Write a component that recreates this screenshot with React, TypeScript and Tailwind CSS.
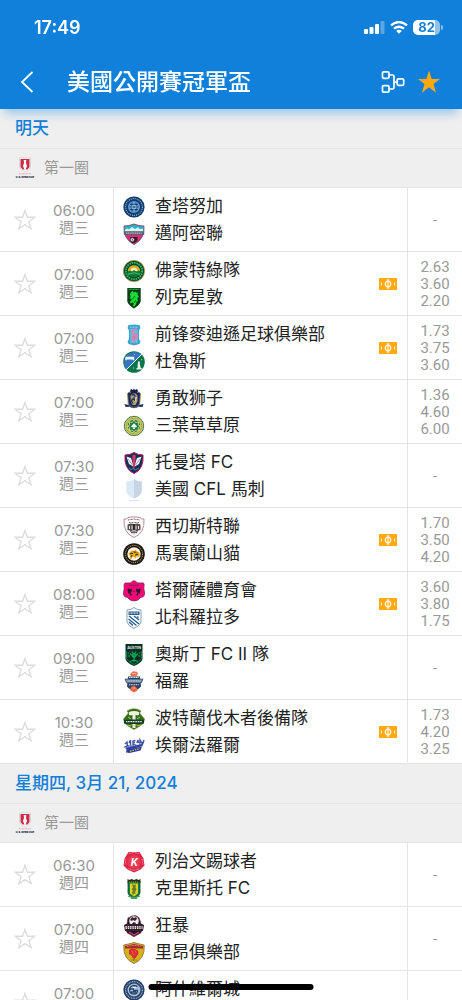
import type { ReactNode } from "react";

const emblems: Record<string, ReactNode> = {
  chattanooga: (
    <>
      <circle cx="11" cy="11" r="10.6" fill="#123a6b" />
      <circle cx="11" cy="11" r="8.4" fill="none" stroke="#7fb0de" strokeWidth="1.2" strokeDasharray="1.1 0.9" />
      <circle cx="11" cy="11" r="6" fill="#5f9bd3" />
      <path d="M7 8.5h8M6.5 11h9M7 13.5h8M9 6.5v9M13 6.5v9" stroke="#123a6b" strokeWidth="0.9" />
      <circle cx="11" cy="11" r="2" fill="none" stroke="#b6d5f2" strokeWidth="0.8" />
    </>
  ),
  miami: (
    <>
      <path d="M1 3 Q6 3 11 1 Q16 3 21 3 Q22 16 11 21.5 Q0 16 1 3Z" fill="#e6287c" stroke="#4d5961" strokeWidth="0.8" />
      <path d="M1.4 3.4 Q6 3.5 11 1.5 Q16 3.5 20.6 3.4 V9 H1.4Z" fill="#27b3c2" />
      <path d="M2 7l2-1.5 2 1 3-2.5 3 2 3-1.800 2 2 3-.800v3H2Z" fill="#dff2f3" />
      <path d="M0.8 8.3h20.4v3.6H0.8Z" fill="#59636c" />
      <path d="M3 10.1h16" stroke="#b9c1c6" strokeWidth="1.300" strokeDasharray="1.2 0.6" />
      <path d="M7.500 14h7v3.500l-3 2.500H9l-2-2Z" fill="#29242c" />
      <circle cx="9.3" cy="16.8" r="2" fill="#fff" stroke="#222" strokeWidth="0.6" />
      <path d="M8.7 16.200h1.200v1.200H8.700z" fill="#29242c" />
    </>
  ),
  vermont: (
    <>
      <circle cx="11" cy="11" r="10.6" fill="#0c3f28" stroke="#af914a" strokeWidth="0.8" />
      <circle cx="11" cy="11" r="8.2" fill="none" stroke="#27b95c" strokeWidth="2" strokeDasharray="1.6 0.8" />
      <circle cx="11" cy="11" r="6.3" fill="#13743d" />
      <path d="M4.8 11.5a6.2 6.2 0 0 1 12.4 0Z" fill="#dfa92a" />
      <path d="M7.6 11.2a3.4 3.4 0 0 1 6.8 0Z" fill="#fff0a5" />
      <path d="M3.8 12.6 7 10.5l2 1.3 2-1.8 2.3 1.8 2-1.2 3 2-1.4 3H5.2Z" fill="#087a3d" />
      <path d="M5 14.3q6-3 12 0" fill="none" stroke="#53d66e" strokeWidth="0.8" />
    </>
  ),
  lexington: (
    <>
      <path d="M4.3 1h13.4v13.2q-1 4-6.7 7.3-5.700-3.300-6.700-7.300Z" fill="#063b17" />
      <path d="M5.700 2.300h10.600" stroke="#26c33c" strokeWidth="1.200" strokeDasharray="1 .5" />
      <path d="m8 5 2-1 .8 1.500 1.500-1 1 1.200 2-.2-1 2 1.500 1.800-1.500 2.500.8 2.200-1.800.8 0 2-2 2.600-1.600-.7 1.300-2-1.500-1.300-1.800 1-1-1.500 2-1.700-.7-1.800-1.500.5 1-2.200L7 7.500Z" fill="#17df32" />
      <path d="M9 12.500 12 9M11 16l2-3" stroke="#063b17" strokeWidth=".7" />
    </>
  ),
  madison: (
    <>
      <path d="M5.500 1 11 .4l5.500.6 1 3-1.500 2.500v8.500l1.500 2.500-1 2.500-5.500 1.500L5.500 20l-1-2.500L6 15V6.500L4.500 4Z" fill="#3ba5cf" />
      <path d="M7.300 5h7.400v12L11 19.500 7.300 17Z" fill="#71bad9" />
      <path d="M13.500 4.500 9.500 7v2.500l4.500 1.200V14l-3 1-2.500-.8M11 9v6l-.5 4" fill="none" stroke="#e47bb5" strokeWidth="1.500" />
      <path d="M9 12h4l-1 3H9Z" fill="#d879b0" />
      <path d="M7 3.200h8M7.500 18h2M13 18h2" stroke="#a9d8ea" strokeWidth=".9" strokeDasharray="1 .5" />
    </>
  ),
  duluth: (
    <>
      <circle cx="11" cy="11" r="10.800" fill="#08764a" />
      <path d="M3.400 18.600A10.800 10.800 0 0 1 18.600 3.400Z" fill="#3674bf" />
      <path d="M3 19 19 3" stroke="#fff" strokeWidth=".9" />
      <path d="M3 9.300V6.500h7.500v2.800M3 7.800h7.500" fill="none" stroke="#f1f7fb" strokeWidth="1.400" />
      <path d="m15.500 10 1.500 1-.2 2 1 4h1v1.500h-5.300V17h1l.3-5Z" fill="#e9f0e7" />
      <path d="m11 3 .8.7M18 9l1-.6M10 17h1" stroke="#e9f0e7" strokeWidth=".8" />
    </>
  ),
  valor: (
    <>
      <path d="M4.500 5.500 6 4l5 1 5-1 1.500 1.500-.8 11L11 20l-5.700-3.500Z" fill="#142a63" stroke="#a99257" strokeWidth=".9" />
      <path d="m7 3 1-2 2 1 1-1.500L12 2l2-1 1 2-1 2H8Z" fill="#17224d" />
      <path d="M7.500 9q0-3.500 3.500-3.500T14.500 9v4l-2 4h-3L8 14Z" fill="#b8a15e" />
      <path d="m8.500 7 2.500-.5 1.500 2-1.500 1 .5 2.500-2-1-1 2 1.500 2.500" fill="none" stroke="#1b306c" strokeWidth="1.300" />
      <path d="m11.500 9 2 .5-1 2 .4 2" fill="none" stroke="#f2e8ba" strokeWidth=".9" />
      <path d="m1.500 16 4 1q5.500 2 11 0l4-1-1 3-4-.2q-4.500 2.500-9 0l-4 .2Z" fill="#202d61" />
      <path d="M6 18.500q5 1.500 10 0" fill="none" stroke="#b6ac87" strokeWidth=".7" strokeDasharray="1 .6" />
    </>
  ),
  clover: (
    <>
      <circle cx="11" cy="11" r="9.700" fill="#d9c861" stroke="#27754a" strokeWidth=".9" />
      <circle cx="11" cy="11" r="7.700" fill="none" stroke="#618f4c" strokeWidth=".9" strokeDasharray="1 .7" />
      <circle cx="11" cy="11" r="6.200" fill="#19764a" />
      <path d="m11 5 1.700 2.500 3-.5-.5 3L17.500 11l-2.300 1.500.5 3-3-.5L11 17l-1.700-2-3 .5.500-3L4.500 11l2.300-1-.5-3 3 .5Z" fill="none" stroke="#d9dd78" strokeWidth=".9" />
      <path d="M11 8.500q2 0 1.200 1.700 2-.3 1.500 1.500-.5 1.500-2.200.4l.5 2h-2l.5-2q-1.700 1-2.200-.4-.5-1.800 1.500-1.500-.8-1.700 1.200-1.700Z" fill="#fff" />
    </>
  ),
  tormenta: (
    <>
      <path d="M2 3q5 0 9-2.500Q15 3 20 3q1.200 14-9 18.500Q.8 17 2 3Z" fill="#132e57" stroke="#b51852" strokeWidth="1" />
      <path d="M3.500 4.500 8 6l3 9-5-3Z M18.500 4.500 14 6l-3 9 5-3Z" fill="#eef2f6" />
      <path d="m9.300 3.500 1.700-1 1.700 1L12 15l-1 2-1-2Z" fill="#d93668" />
      <path d="m5 7 4.500 6M17 7l-4.500 6" stroke="#65738e" strokeWidth=".6" />
      <path d="m6 16 2 1.500 2-1 2 1.500 4-2" fill="none" stroke="#3d8caa" strokeWidth="1" />
    </>
  ),
  placeholder: (
    <>
      <path d="M11 0q3 2.500 7.700 2.500v9Q18.500 17 11 19.500 3.500 17 3.300 11.500v-9Q8 2.500 11 0Z" fill="#dbe8f5" />
      <path d="M11 0q3 2.500 7.700 2.500v9Q18.500 17 11 19.500Z" fill="#c6d4e3" />
      <path d="M6 21.500h10" stroke="#d5dbe1" strokeWidth=".8" />
    </>
  ),
  westchester: (
    <>
      <path d="M1 3q3 .5 4-1.500 6-1.500 12 0Q18 3.500 21 3q1 14-10 18.500Q0 17 1 3Z" fill="#fff" stroke="#a76c73" strokeWidth=".8" />
      <path d="m5 4 6-1 6 1M6 6.500h10" fill="none" stroke="#5f494b" strokeWidth=".9" strokeDasharray="1 .5" />
      <path d="m4.500 8.500 3-1 3.500.500 3.500-.500 3 1V14l-2.500.500-1 2.500-3 1.500L8 17l-1-2.500L4.500 14Z" fill="#554c4e" />
      <path d="M6.500 10v3M9 9.500v4M13 9.500v4M15.500 10v3M8.500 15.500l2.500-1 2.500 1M9 17.300h4" fill="none" stroke="#fff" strokeWidth=".9" />
      <path d="M10 8v6h2V8Z" fill="#2e2628" />
    </>
  ),
  maryland: (
    <>
      <circle cx="11" cy="11" r="10.800" fill="#171717" />
      <circle cx="11" cy="11" r="8.600" fill="none" stroke="#bd9e4a" strokeWidth="1.100" strokeDasharray="1 .9" />
      <circle cx="11" cy="11" r="6.700" fill="#fff7e5" />
      <path d="m5.500 10.500 3-3 2.500.3 2-1.300.6 1.600 2.200.8 1.400 3-1.400 2-2.200-.3-1 1.800-2.200-1.600-1.400.6-.8 2-1.700-1.500.7-2Z" fill="#e7a923" />
      <path d="m7 11 2-1 1 1M10.500 9l2.500.2M12 12l3-.5M13.500 10h1M8 14l1-2" stroke="#302310" strokeWidth="1" fill="none" />
    </>
  ),
  tulsa: (
    <>
      <path d="M4 3q4 .5 5.500-1.800 1.500-1 3 0Q14 3.500 18 3q4-1 3 3-.5 3 .5 6 1 5-4 5.500Q15 21 11 21q-4 0-6.500-3.500-5-.5-4-5.500 1-3 .5-6 0-4 3-3Z" fill="#ef0876" stroke="#73244e" strokeWidth=".7" />
      <path d="M6 5.300h10" stroke="#76204e" strokeWidth="1.100" strokeDasharray="1.500 .5" />
      <path d="m4.500 9 1.500-.500 1 1 1.500-1 .5 2.500-1.500 1.500L9 15.500l-1.500-.500L7 16l-.500-3-1.500.5ZM17.500 9 16 8.500l-1 1-1.500-1-.5 2.500 1.500 1.500L13 15.500l1.500-.500.500 1 .5-3 1.500.5Z" fill="#2a1729" />
      <path d="m10.200 12 1-1.500.9 1.500Z" fill="#411a35" />
    </>
  ),
  northcolorado: (
    <>
      <path d="M4 3q4 0 7-2.500Q14 3 18 3v12q-1 4-7 6.500Q5 19 4 15Z" fill="#fff" stroke="#7695ae" strokeWidth=".9" />
      <path d="M5.500 4.500h11V8h-11z" fill="#285e8d" />
      <path d="M6.500 6.200h9" stroke="#d8e5ef" strokeWidth="1.300" strokeDasharray="1 .5" />
      <path d="m6 9 10 8M5.500 12l8 6.500M11 9l5 4M6 15l4 3.500" stroke="#285e8d" strokeWidth="1.300" />
      <path d="m14 9 .5.900 1 .1-.8.700.2 1" stroke="#3b76a2" strokeWidth=".9" />
    </>
  ),
  austin: (
    <>
      <path d="M2.500 0h17v15q-1 4-8.500 7-7.500-3-8.500-7Z" fill="#0a3024" />
      <text x="11" y="5.300" textAnchor="middle" fontSize="3.600" fontWeight="700" fill="#e5eee9">AUSTIN</text>
      <path d="M3.500 7v7.500q1 3 7.500 6 6.500-3 7.500-6V7" fill="none" stroke="#078b42" strokeWidth=".8" />
      <path d="M11 18V9M11 13 7 9.500M11 13l4-3.500M11 11 9 7.500M11 11l2-3.500M7 12H4.500M15 12h2.500M11 16l-4 1.500M11 16l4 1.500M6 9H4.500M16 9h1.500" fill="none" stroke="#12a653" strokeWidth="1.200" />
      <circle cx="11" cy="11.500" r="2" fill="none" stroke="#12a653" />
    </>
  ),
  foro: (
    <>
      <path d="m8 2 2-1.700 4 .4 1 2.300-1.500 2.300H8.500L7 3.800Z" fill="#ec7450" />
      <path d="M5 5.500h12l1 10-2 2-5 2-5-2-2-2Z" fill="#294267" />
      <path d="M2 8h18l-1.500 4H3.500Z" fill="#72839b" stroke="#304867" strokeWidth=".6" />
      <path d="M4.500 10h13M6 6.500h10M6 13.800h10" stroke="#dce5ed" strokeWidth="1.100" strokeDasharray="1.200 .5" />
      <path d="m8 16 2.500-1.500L13 16l2 3-4 2.500L7 19Z" fill="#e9643f" />
      <path d="M9 2.500h4M9.500 17h3" stroke="#ffc1a7" strokeWidth=".8" />
    </>
  ),
  portland: (
    <>
      <path d="M4 3q7-4.500 14 0l-1.500 2Q19 8 21.500 11q-.5 5-4.500 7l-6 3.500L5 18q-4-2-4.500-7Q3 8 5.500 5Z" fill="#2f6e22" stroke="#79852d" strokeWidth=".7" />
      <path d="M6 4q5-2 10 0v3q-2 .6-3.500 0V20h-3V7Q8 7.600 6 7Z" fill="#eff1db" />
      <path d="m5 9 3 2M17 9l-3 2M4 17l4 1M18 17l-4 1" stroke="#b6c651" strokeWidth="1" />
      <path d="M1 12q10-1 20 0v3.500q-10 1-20 0Z" fill="#133c21" />
      <path d="M3 13.700h16" stroke="#fff" strokeWidth="1.300" strokeDasharray="1.100 .6" />
      <path d="M8 17h6" stroke="#c8ce56" strokeWidth=".7" />
    </>
  ),
  farolito: (
    <>
      <path d="m2 9 2-2 .5 4M6 8l1.500-3v6M10 10V6l2.500-.5M10 8l2-.5M14 8l1-3 .5 3M17 9V5l2 3M20 8l1-3" fill="none" stroke="#4a59a6" strokeWidth="1.500" />
      <path d="m.500 12 4-2 3 1 4-2 3 1 6.500-3-1.500 4L7 15l-4 3 .5-4Z" fill="#3142a2" />
      <path d="m5 15 14-3.500-1.500 4-11 2.500-2.500-.5Z" fill="#263994" />
      <path d="m2 12.500 17-4" stroke="#c8cceb" strokeWidth=".9" strokeDasharray="1.500 .7" />
      <path d="m7 16.200 10-2.500" stroke="#d8ca68" strokeWidth="1.200" strokeDasharray="1.500 1" />
    </>
  ),
  richmond: (
    <>
      <path d="M5.500 1h11l4 6.500 1 7-4 4-6.500 3-6.500-3-4-4 1-7Z" fill="#de2648" />
      <path d="m6 2.500 5-1 5 1M3 8l-1 5.500M19 8l1 5.500M5.500 17.500l5.500 2 5.500-2" fill="none" stroke="#f7a3ae" strokeWidth=".8" strokeDasharray="1 .5" />
      <circle cx="11" cy="11" r="6.800" fill="#e93a53" />
      <text x="11.300" y="14.900" textAnchor="middle" fontSize="10" fontStyle="italic" fontWeight="700" fill="#fff">K</text>
    </>
  ),
  christos: (
    <>
      <path d="m4.500 1 2 1 2-1 2.500 1 2.500-1 2 1 2-1v4h-13Z" fill="#242e15" />
      <path d="M5 4h12v11q-.5 3-6 5-5.500-2-6-5Z" fill="#087f3e" stroke="#134424" strokeWidth=".8" />
      <path d="M7 5.500h8v10l-4 3-4-3Z" fill="#e4cf27" />
      <path d="m9 6 2 1 2-.5-.5 3 1 2-1.500 2.500 1 2-2-.5-1 2-1-3 1-2-1.500-1 1.500-2Z" fill="#60802a" />
      <path d="M5 18q6 3 12 0M8 20.500h6" fill="none" stroke="#3fa65c" strokeWidth="1.100" />
      <path d="M6.500 4h9" stroke="#e5d451" strokeWidth=".8" strokeDasharray="1 .8" />
    </>
  ),
  fury: (
    <>
      <path d="m5 3 4-2 4-.3 3 2 2 6 2 2-2 7-7 4-7-4-2-7 2-2Z" fill="#231522" stroke="#7c2944" strokeWidth=".7" />
      <circle cx="11" cy="6" r="5" fill="#f2edef" stroke="#41313b" strokeWidth=".5" />
      <path d="m9 2 2 1 2-1 1 2-2 2-2-1-1 1-2-1ZM11 7l2 1-1 2h-2L9 8.500Z" fill="#34242f" />
      <path d="m1 10 2-1h16l2 1-1 6H2Z" fill="#30202e" />
      <path d="M2.500 12.500h17" stroke="#eee5e9" strokeWidth="3.200" strokeDasharray="1.400 .9" />
      <path d="M3 12.500h16" stroke="#8b6c7b" strokeWidth=".6" />
      <path d="m6 17 5 3 5-3" fill="none" stroke="#c6476b" strokeWidth="1.200" />
    </>
  ),
  lions: (
    <>
      <path d="M.8 3Q6 2 11 .5 16 2 21.200 3q1 14-10.200 18.500Q-.2 17 .8 3Z" fill="#d2b31c" stroke="#8e6330" strokeWidth=".8" />
      <path d="m2 4 9-2 9 2v2.500H2Z" fill="#a92931" />
      <path d="M4 4.500q7-2 14 0" fill="none" stroke="#e4ba65" strokeWidth=".8" strokeDasharray="1 .6" />
      <path d="m6 8 3-1.500 3 .5 3 1.500.5 3-1.500 2.500-2.500 3-2-1-.5-2-3-2Z" fill="#d42d34" />
      <path d="m8 9 2 1-.5 2 2 1M12 8.500l1 2-1 1" fill="none" stroke="#f0702f" strokeWidth=".8" />
      <path d="M8.500 18h5" stroke="#4c5d2a" strokeWidth="1.200" strokeDasharray="1 .5" />
    </>
  ),
  asheville: (
    <>
      <circle cx="11" cy="11" r="10.600" fill="#233e68" />
      <circle cx="11" cy="11" r="8.400" fill="none" stroke="#aabdd3" strokeWidth="1.100" strokeDasharray="1 .7" />
      <circle cx="11" cy="11" r="6.500" fill="#a9c2db" />
      <path d="M14.500 7.500q-6-2.500-7.500 1.500-1.500 6 4 6 3.500 0 3.500-3.500H10M6 10h5M8 13h5" fill="none" stroke="#294870" strokeWidth="1.400" />
      <path d="M10 8.500h3" stroke="#f2f6fa" />
    </>
  ),
};

type Match = {
  time: string;
  day: string;
  home: string;
  homeEmblem: string;
  away?: string;
  awayEmblem?: string;
  odds?: string[];
  ticket?: boolean;
};

const wednesday: Match[] = [
  { time: "06:00", day: "週三", home: "查塔努加", homeEmblem: "chattanooga", away: "邁阿密聯", awayEmblem: "miami" },
  { time: "07:00", day: "週三", home: "佛蒙特綠隊", homeEmblem: "vermont", away: "列克星敦", awayEmblem: "lexington", odds: ["2.63", "3.60", "2.20"], ticket: true },
  { time: "07:00", day: "週三", home: "前锋麥迪遜足球俱樂部", homeEmblem: "madison", away: "杜魯斯", awayEmblem: "duluth", odds: ["1.73", "3.75", "3.60"], ticket: true },
  { time: "07:00", day: "週三", home: "勇敢狮子", homeEmblem: "valor", away: "三葉草草原", awayEmblem: "clover", odds: ["1.36", "4.60", "6.00"] },
  { time: "07:30", day: "週三", home: "托曼塔 FC", homeEmblem: "tormenta", away: "美國 CFL 馬刺", awayEmblem: "placeholder" },
  { time: "07:30", day: "週三", home: "西切斯特聯", homeEmblem: "westchester", away: "馬裏蘭山貓", awayEmblem: "maryland", odds: ["1.70", "3.50", "4.20"], ticket: true },
  { time: "08:00", day: "週三", home: "塔爾薩體育會", homeEmblem: "tulsa", away: "北科羅拉多", awayEmblem: "northcolorado", odds: ["3.60", "3.80", "1.75"], ticket: true },
  { time: "09:00", day: "週三", home: "奧斯丁 FC II 隊", homeEmblem: "austin", away: "福羅", awayEmblem: "foro" },
  { time: "10:30", day: "週三", home: "波特蘭伐木者後備隊", homeEmblem: "portland", away: "埃爾法羅爾", awayEmblem: "farolito", odds: ["1.73", "4.20", "3.25"], ticket: true },
];

const thursday: Match[] = [
  { time: "06:30", day: "週四", home: "列治文踢球者", homeEmblem: "richmond", away: "克里斯托 FC", awayEmblem: "christos" },
  { time: "07:00", day: "週四", home: "狂暴", homeEmblem: "fury", away: "里昂俱樂部", awayEmblem: "lions" },
  { time: "07:00", day: "週四", home: "阿什維爾城", homeEmblem: "asheville" },
];

const starPath = "M12 1.500 14.600 9h8l-6.300 4.900 2.300 7.600-6.600-4.500-6.600 4.500 2.300-7.600L1.400 9h8Z";

function Team({ name, emblem }: { name: string; emblem: string }) {
  return (
    <div className="flex h-[27px] items-center gap-2.5">
      <svg viewBox="0 0 22 22" className="size-[22px] shrink-0" aria-hidden="true">
        {emblems[emblem]}
      </svg>
      <span className="truncate text-[17px] leading-[27px] text-[#222]">{name}</span>
    </div>
  );
}

function TicketIcon() {
  return (
    <svg viewBox="0 0 18 12" className="mr-2.5 h-3 w-[18px] shrink-0 self-center" aria-hidden="true">
      <rect width="18" height="12" rx=".5" fill="#ffa90f" />
      <g fill="none" stroke="#fff">
        <ellipse cx="9" cy="6" rx="2.700" ry="2.800" strokeWidth="1.200" />
        <path d="M9 1v10" strokeWidth="1.200" />
        <path d="M2.500 4.800v2.400M15.500 4.800v2.400" strokeWidth="1.100" />
      </g>
    </svg>
  );
}

function MatchRow({ match }: { match: Match }) {
  return (
    <li className="flex h-16 border-b border-[#e4e4e4] bg-white">
      <div className="flex w-[114px] shrink-0 border-r border-[#e4e4e4]">
        <button type="button" aria-label="收藏" className="flex w-[49px] items-center justify-center">
          <svg viewBox="0 0 24 24" className="size-[22px]" fill="none" stroke="#dcdcdc" strokeWidth="1.500" aria-hidden="true">
            <path d={starPath} />
          </svg>
        </button>
        <div className="flex w-[50px] flex-col justify-center pb-0.5 text-center text-[15px] leading-[17px] text-[#999]">
          <time>{match.time}</time>
          <span>{match.day}</span>
        </div>
      </div>
      <div className="flex min-w-0 flex-1">
        <div className="min-w-0 flex-1 pt-[5px] pl-[9px]">
          <Team name={match.home} emblem={match.homeEmblem} />
          {match.away && match.awayEmblem && <Team name={match.away} emblem={match.awayEmblem} />}
        </div>
        {match.ticket && <TicketIcon />}
      </div>
      <div className="flex w-[55px] shrink-0 flex-col justify-center border-l border-[#e4e4e4] pt-0.5 text-center font-[Roboto,sans-serif] text-[15px] leading-[17px] text-[#999]">
        {match.odds ? match.odds.map((odd, i) => <span key={i}>{odd}</span>) : <span>-</span>}
      </div>
    </li>
  );
}

function DaySection({ title, matches }: { title: string; matches: Match[] }) {
  return (
    <section>
      <h2 className="flex h-10 items-center border-b border-[#e4e4e4] bg-[#efefef] px-[15px] text-[17px] font-medium text-[#1080da]">
        {title}
      </h2>
      <div className="flex h-[39px] items-center gap-[9px] border-b border-[#e4e4e4] bg-[#efefef] px-[15px]">
        <svg viewBox="0 0 20 22" className="h-[22px] w-5" aria-hidden="true">
          <path d="M4.500 1h11v9q-1 3-5.500 5-4.500-2-5.500-5Z" fill="#fff" stroke="#c6cbd2" strokeWidth=".7" />
          <path d="M5.500 2h9v8l-2 2.500h-5l-2-2.500Z" fill="#ce2b43" />
          <path d="M8.700 3h2.600l-.3 3 1 3-2 5-2-5 1-3Z" fill="#fff" />
          <path d="M4 16.800h12" stroke="#db8792" strokeWidth=".7" strokeDasharray="1 .4" />
          <text x="10" y="20.800" textAnchor="middle" fontSize="2.500" fontWeight="900" fill="#252b48">U.S. OPEN CUP</text>
        </svg>
        <h3 className="text-[15px] text-[#999]">第一圈</h3>
      </div>
      <ul>
        {matches.map((match, i) => (
          <MatchRow key={i} match={match} />
        ))}
      </ul>
    </section>
  );
}

function StatusBar() {
  return (
    <div className="flex h-[54px] items-center justify-between pr-[19px] pl-[34px]">
      <time className="text-[18px] font-semibold">17:49</time>
      <div className="flex items-center gap-[5px]">
        <svg viewBox="0 0 21 13" className="h-[13px] w-[21px]" fill="#fff" aria-hidden="true">
          <rect x="0" y="8" width="4" height="5" rx="1" />
          <rect x="5.500" y="6" width="4" height="7" rx="1" />
          <rect x="11" y="3" width="4" height="10" rx="1" />
          <rect x="16.500" y="0" width="4" height="13" rx="1" opacity=".3" />
        </svg>
        <svg viewBox="0 0 18 13" className="h-[13px] w-[18px]" fill="none" stroke="#fff" aria-hidden="true">
          <path d="M1 4.400q8-6.800 16 0M4 7.700q5-4 10 0" strokeWidth="2.300" />
          <path d="m9 12.700-2.800-2.800q2.800-2.200 5.600 0Z" fill="#fff" stroke="none" />
        </svg>
        <div className="flex items-center gap-px">
          <span className="flex h-[15px] w-[27px] items-center justify-center rounded-[5px] bg-[linear-gradient(to_right,#fff_82%,#8fc2ed_82%)] text-[13px] leading-[15px] font-bold text-[#1080da]">
            82
          </span>
          <span className="h-[5px] w-0.5 rounded-r-full bg-white/50" />
        </div>
      </div>
    </div>
  );
}

export default function App() {
  return (
    <div className="relative flex h-screen flex-col overflow-hidden bg-white font-[Inter,'Noto_Sans_CJK_TC',sans-serif]">
      <header className="relative z-10 shrink-0 bg-[#1080da] text-white shadow-[0_8px_10px_-4px_rgba(16,128,218,0.4)]">
        <StatusBar />
        <div className="flex h-[55px] items-center pr-[21px]">
          <button type="button" aria-label="返回" className="flex w-[67px] shrink-0 pl-5">
            <svg viewBox="0 0 14 22" className="h-[22px] w-3.5" fill="none" stroke="#fff" strokeWidth="1.800" aria-hidden="true">
              <path d="M12.500 1 2 11l10.500 10" />
            </svg>
          </button>
          <h1 className="min-w-0 flex-1 truncate pt-0.5 text-[23px] font-medium">美國公開賽冠軍盃</h1>
          <div className="flex items-center gap-3">
            <button type="button" aria-label="對陣圖">
              <svg viewBox="0 0 24 24" className="size-6" fill="none" stroke="#fff" strokeWidth="1.700" aria-hidden="true">
                <rect x="1.500" y="1.800" width="6.500" height="6.500" rx="1.200" />
                <rect x="1.500" y="15.700" width="6.500" height="6.500" rx="1.200" />
                <rect x="16.200" y="8.800" width="6.500" height="6.500" rx="1.200" />
                <path d="M8 5h3.500q1.500 0 1.500 1.500v11q0 1.500-1.500 1.500H8M13 12h3.200" />
              </svg>
            </button>
            <button type="button" aria-label="取消收藏">
              <svg viewBox="0 0 24 24" className="size-6" fill="#ffa90f" aria-hidden="true">
                <path d="M12 .5 14.700 9h8.300l-6.500 5 2.500 8.700-7-5.400-7 5.400L7.500 14 1 9h8.300Z" />
              </svg>
            </button>
          </div>
        </div>
      </header>
      <main className="min-h-0 flex-1 overflow-y-auto [scrollbar-width:none]">
        <DaySection title="明天" matches={wednesday} />
        <DaySection title="星期四, 3月 21, 2024" matches={thursday} />
      </main>
      <div className="absolute bottom-2.5 left-1/2 h-1.5 w-[165px] -translate-x-1/2 rounded-full bg-black" />
    </div>
  );
}
